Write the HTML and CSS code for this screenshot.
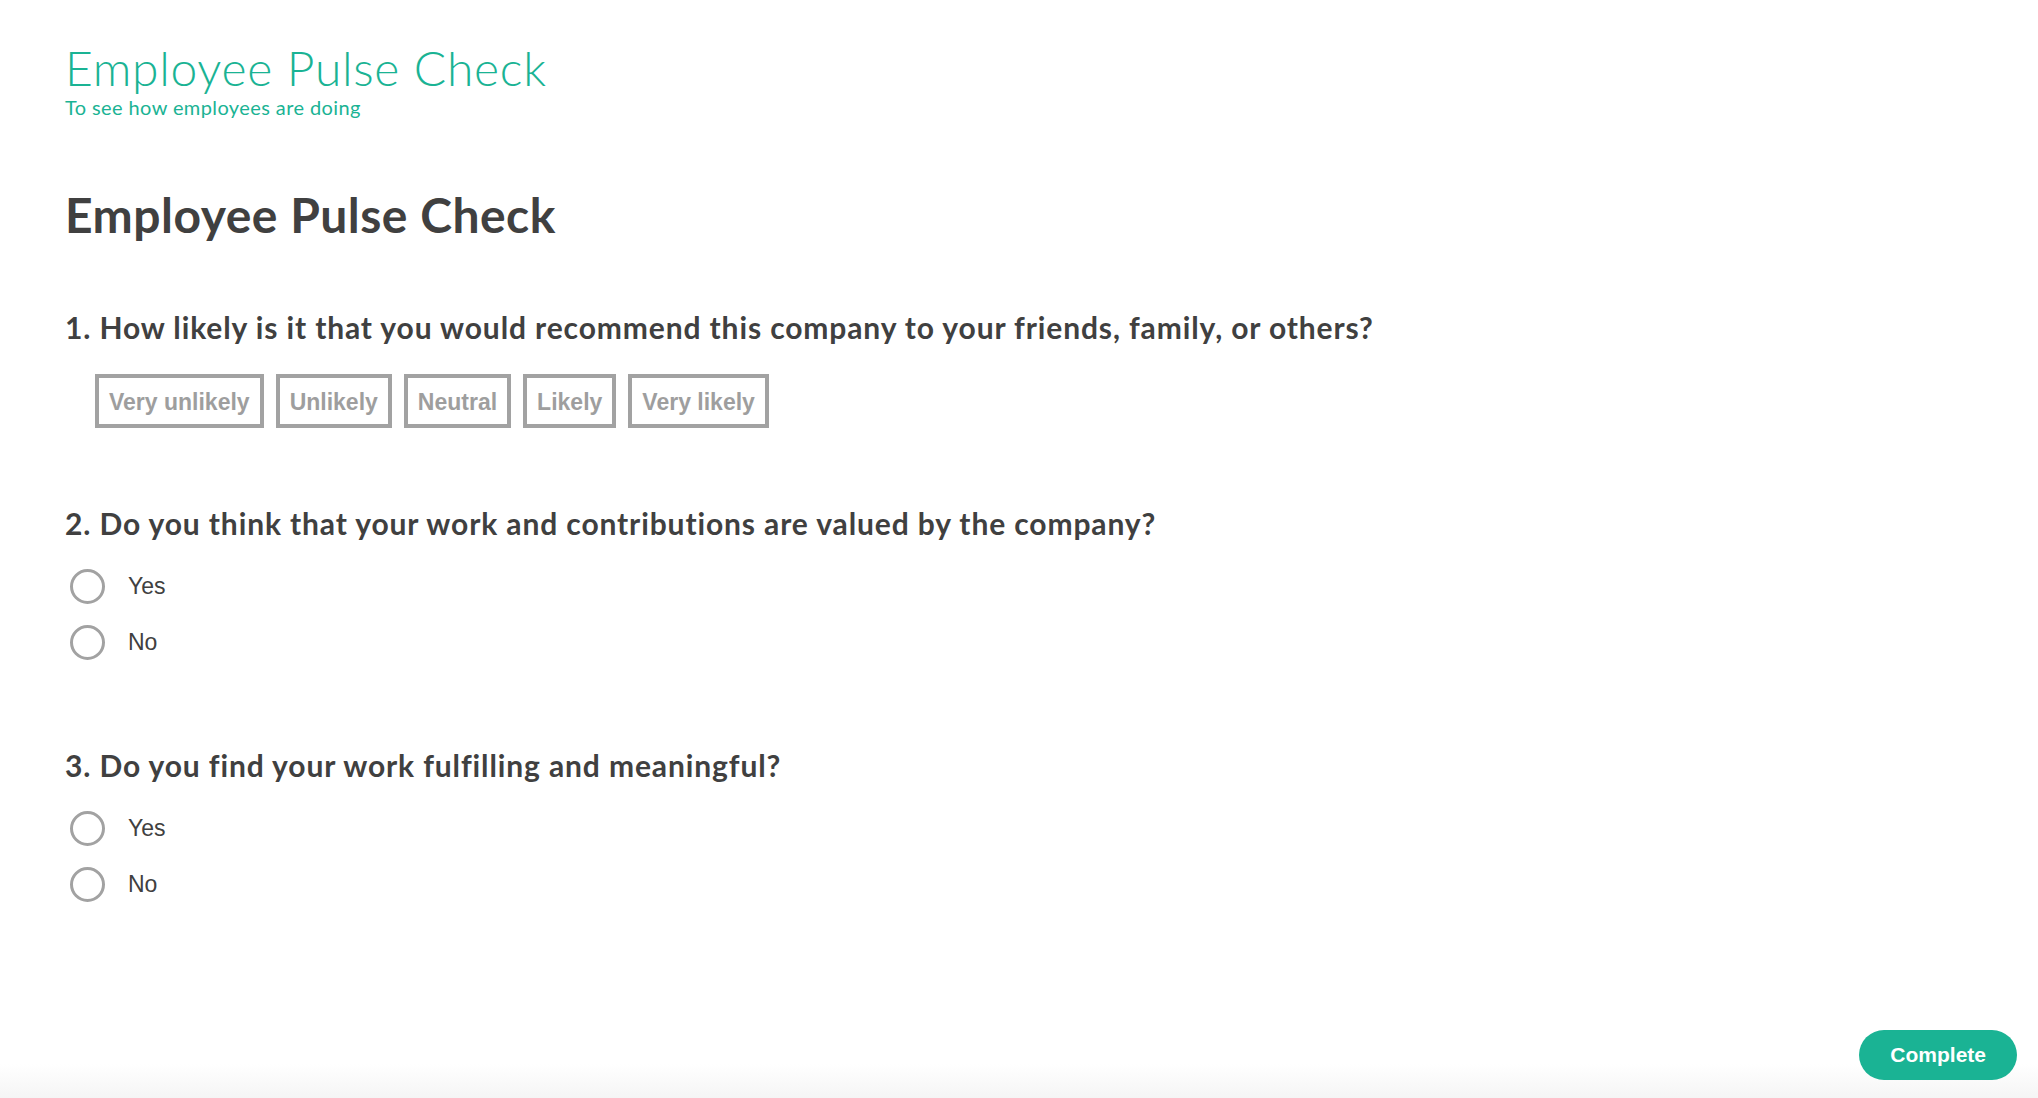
FILE: index.html
```html
<!DOCTYPE html>
<html lang="en">
<head>
<meta charset="utf-8">
<title>Employee Pulse Check</title>
<link rel="stylesheet" href="styles.css">
</head>
<body>
<div class="page">
  <header class="survey-header">
    <h3 class="survey-title">Employee Pulse Check</h3>
    <div class="survey-desc">To see how employees are doing</div>
  </header>
  <main class="survey-body">
    <h4 class="page-title">Employee Pulse Check</h4>

    <section class="question q-rating">
      <h5 class="q-title">1. How likely is it that you would recommend this company to your friends, family, or others?</h5>
      <div class="rating">
        <span class="rating-item">Very unlikely</span>
        <span class="rating-item">Unlikely</span>
        <span class="rating-item">Neutral</span>
        <span class="rating-item">Likely</span>
        <span class="rating-item">Very likely</span>
      </div>
    </section>

    <section class="question q-radio">
      <h5 class="q-title">2. Do you think that your work and contributions are valued by the company?</h5>
      <div class="choices">
        <label class="choice"><span class="circle"></span><span class="choice-text">Yes</span></label>
        <label class="choice"><span class="circle"></span><span class="choice-text">No</span></label>
      </div>
    </section>

    <section class="question q-radio q-last">
      <h5 class="q-title">3. Do you find your work fulfilling and meaningful?</h5>
      <div class="choices">
        <label class="choice"><span class="circle"></span><span class="choice-text">Yes</span></label>
        <label class="choice"><span class="circle"></span><span class="choice-text">No</span></label>
      </div>
    </section>
  </main>
  <footer class="survey-footer">
    <button class="complete-btn" type="button">Complete</button>
  </footer>
</div>
</body>
</html>
```

FILE: styles.css
```css
* { box-sizing: border-box; }

html, body {
  margin: 0;
  padding: 0;
  height: 100%;
}

body {
  font-family: "Lato", "Open Sans", sans-serif;
  color: #404040;
  background: #fff;
}

.page {
  min-height: 100vh;
  display: flex;
  flex-direction: column;
  padding: 0 21px 0 65px;
  background: linear-gradient(to bottom, #ffffff 0, #ffffff calc(100% - 34px), #f5f5f5 100%);
}

.survey-header {
  padding-top: 42px;
}

.survey-title {
  margin: 0;
  font-family: "Lato", sans-serif;
  font-weight: 300;
  font-size: 48px;
  line-height: 52px;
  letter-spacing: 0.7px;
  color: #1ab394;
}

.survey-desc {
  margin-top: 1px;
  font-family: "Lato", sans-serif;
  font-weight: 400;
  font-size: 20px;
  line-height: 24px;
  letter-spacing: 0.4px;
  color: #1ab394;
}

.page-title {
  margin: 68px 0 0;
  font-family: "Lato", sans-serif;
  font-weight: 700;
  font-size: 48px;
  line-height: 56px;
  letter-spacing: 0.5px;
  color: #404040;
}

.q-title {
  margin: 0;
  font-family: "Lato", sans-serif;
  font-weight: 700;
  font-size: 30px;
  line-height: 36px;
  letter-spacing: 0.88px;
  color: #404040;
}

.q-rating {
  margin-top: 66px;
}

.rating {
  display: flex;
  gap: 12px;
  margin: 29px 0 0 30px;
}

.rating-item {
  display: block;
  border: 4px solid #a2a2a2;
  padding: 11px 10px 9px;
  font-family: "Liberation Sans", Arial, sans-serif;
  font-weight: 700;
  font-size: 23px;
  line-height: 26px;
  color: #9e9e9e;
  white-space: nowrap;
}

.q-radio {
  margin-top: 77px;
}

.q-radio.q-last {
  margin-top: 77px;
}

.choices {
  margin-top: 17px;
  display: flex;
  flex-direction: column;
}

.choice {
  display: flex;
  align-items: center;
  height: 56px;
  padding-left: 5px;
}

.circle {
  flex: none;
  width: 35px;
  height: 35px;
  border: 3.5px solid #a2a2a2;
  border-radius: 50%;
  background: #fff;
}

.choice-text {
  margin-left: 23px;
  font-family: "Liberation Sans", Arial, sans-serif;
  font-size: 23px;
  color: #404040;
}

.survey-footer {
  margin-top: auto;
  display: flex;
  justify-content: flex-end;
  padding-bottom: 18px;
}

.complete-btn {
  border: none;
  border-radius: 25px;
  background: #1ab394;
  color: #fff;
  height: 50px;
  padding: 0 31px;
  font-family: "Liberation Sans", Arial, sans-serif;
  font-weight: 700;
  font-size: 21px;
  line-height: 50px;
  cursor: pointer;
}
```
